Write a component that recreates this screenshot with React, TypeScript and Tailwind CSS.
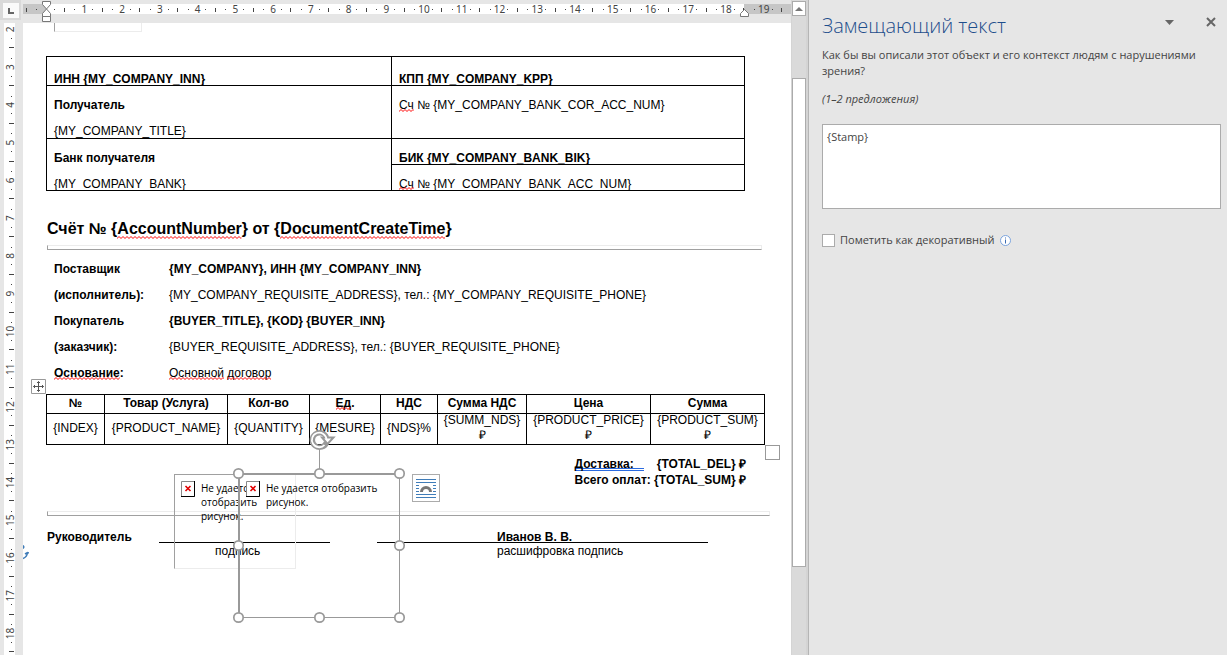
import { useId, useState } from "react"
import type { ReactNode } from "react"
import clsx from "clsx"

const CM = 37.75

const columns = [
  { label: "№", value: "{INDEX}", width: "w-[58px]" },
  { label: "Товар (Услуга)", value: "{PRODUCT_NAME}", width: "w-[123px]" },
  { label: "Кол-во", value: "{QUANTITY}", width: "w-[82px]" },
  { label: "Ед.", value: "{MESURE}", width: "w-[71px]", typo: true },
  { label: "НДС", value: "{NDS}%", width: "w-[57px]" },
  { label: "Сумма НДС", value: "{SUMM_NDS}", width: "w-[89px]", money: true },
  { label: "Цена", value: "{PRODUCT_PRICE}", width: "w-[124px]", money: true },
  { label: "Сумма", value: "{PRODUCT_SUM}", width: "w-[114px]", money: true },
]

function Typo({ children }: { children: ReactNode }) {
  const id = useId()
  return (
    <span className="relative inline-block">
      {children}
      <svg height="3" className="absolute bottom-0 left-0 w-full">
        <pattern id={id} width="4" height="3" patternUnits="userSpaceOnUse">
          <path d="M-1 1.500L0 2.500L2 .5L4 2.500L5 1.500" fill="none" stroke="#f00" />
        </pattern>
        <rect width="100%" height="3" fill={`url(#${id})`} />
      </svg>
    </span>
  )
}

function HorizontalRuler() {
  const marks = Array.from({ length: 20 }, (_, i) => i)
  return (
    <div className="h-[23px] overflow-hidden bg-[#e6e6e6]">
      <svg width="768" height="23" viewBox="23 0 768 23" className="block">
        <rect x="23" y="4" width="768" height="10" fill="#fff" />
        <rect x="23" y="4" width="23" height="10" fill="#c6c6c6" />
        <rect x="744" y="4" width="47" height="10" fill="#c6c6c6" />
        <rect x="26" y="8" width="1" height="4" fill="#444" />
        <rect x="36" y="9" width="1" height="1" fill="#444" />
        {marks.map((n) => {
          const x = 46 + n * CM
          return (
            <g key={n} fill="#444">
              {n > 0 && (
                <text x={x + 0.5} y="13" fontSize="10" textAnchor="middle" className="font-['Noto_Sans',sans-serif]">
                  {n}
                </text>
              )}
              <rect x={Math.round(x + CM / 4) - 1} y="9" width="1" height="1" />
              <rect x={Math.round(x + CM / 2) - 1} y="8" width="1" height="4" />
              {n < 19 && <rect x={Math.round(x + (CM * 3) / 4)} y="9" width="1" height="1" />}
            </g>
          )
        })}
        <path
          d="M42.500 1.500h8v3l-4 4.500l-4-4.500zM42.500 16.500v-3l4-4.500l4 4.500v3zM42.500 16.500h8v5h-8z"
          fill="#fff"
          stroke="#777"
        />
        <path d="M740.500 16.500v-3l4-4l4 4v3z" fill="#fff" stroke="#777" />
      </svg>
    </div>
  )
}

function VerticalRuler() {
  const marks = Array.from({ length: 17 }, (_, i) => i)
  return (
    <div className="w-[23px] shrink-0 bg-[#e6e6e6]">
      <div className="flex h-[20px] w-[21px] items-center justify-center bg-[#d9d9d9]">
        <svg width="16" height="15" viewBox="0 0 16 15">
          <rect width="16" height="15" fill="#fafafa" />
          <path d="M6 5v5h5" fill="none" stroke="#666" strokeWidth="2" />
        </svg>
      </div>
      <svg width="23" height="635" viewBox="0 20 23 635" className="block">
        <rect x="4" y="23" width="11" height="632" fill="#fff" />
        {marks.map((i) => {
          const y = 29.5 + i * CM
          return (
            <g key={i} fill="#444">
              <text
                transform={`translate(14 ${y}) rotate(-90)`}
                fontSize="10"
                textAnchor="middle"
                className="font-['Noto_Sans',sans-serif]"
              >
                {i + 2}
              </text>
              <rect x="11" y={Math.round(y + CM / 4) - 1} width="1" height="1" />
              <rect x="9" y={Math.round(y + CM / 2) - 1} width="5" height="1" />
              <rect x="11" y={Math.round(y + (CM * 3) / 4)} width="1" height="1" />
            </g>
          )
        })}
      </svg>
    </div>
  )
}

function Rule({ className }: { className?: string }) {
  return (
    <hr className={clsx("h-[5px] border border-t-[#ececec] border-r-[#ececec] border-b-[#a0a0a0] border-l-[#a0a0a0]", className)} />
  )
}

function RequisitesTable() {
  return (
    <table className="mr-6 ml-[23px] w-[calc(100%-46px)] table-fixed border-collapse leading-3 [&_td]:border [&_td]:border-black [&_td]:p-0 [&_td]:pl-[7px] [&_td]:align-top">
      <colgroup>
        <col className="w-[345px]" />
        <col />
      </colgroup>
      <tbody>
        <tr className="font-bold">
          <td>
            <p className="pt-4">ИНН {"{MY_COMPANY_INN}"}</p>
          </td>
          <td>
            <p className="pt-4">КПП {"{MY_COMPANY_KPP}"}</p>
          </td>
        </tr>
        <tr className="leading-[14px]">
          <td>
            <p className="pt-3 font-bold">Получатель</p>
            <p className="pt-3">{"{MY_COMPANY_TITLE}"}</p>
          </td>
          <td>
            <p className="pt-3">
              <Typo>Сч</Typo> № {"{MY_COMPANY_BANK_COR_ACC_NUM}"}
            </p>
          </td>
        </tr>
        <tr>
          <td rowSpan={2}>
            <p className="pt-[13px] font-bold">Банк получателя</p>
            <p className="pt-[14px]">{"{MY_COMPANY_BANK}"}</p>
          </td>
          <td>
            <p className="pt-[13px] font-bold">БИК {"{MY_COMPANY_BANK_BIK}"}</p>
          </td>
        </tr>
        <tr>
          <td>
            <p className="pt-[13px]">
              <Typo>Сч</Typo> № {"{MY_COMPANY_BANK_ACC_NUM}"}
            </p>
          </td>
        </tr>
      </tbody>
    </table>
  )
}

function Parties() {
  return (
    <dl className="mt-1.5 grid grid-cols-[115px_1fr] pl-[31px] leading-[26px] [&_dt]:font-bold">
      <dt>Поставщик</dt>
      <dd className="font-bold">{"{MY_COMPANY}, ИНН {MY_COMPANY_INN}"}</dd>
      <dt>(исполнитель):</dt>
      <dd>{"{MY_COMPANY_REQUISITE_ADDRESS}, тел.: {MY_COMPANY_REQUISITE_PHONE}"}</dd>
      <dt>Покупатель</dt>
      <dd className="font-bold">{"{BUYER_TITLE}, {KOD} {BUYER_INN}"}</dd>
      <dt>(заказчик):</dt>
      <dd>{"{BUYER_REQUISITE_ADDRESS}, тел.: {BUYER_REQUISITE_PHONE}"}</dd>
      <dt className="py-1.5 leading-[14px]">
        <Typo>Основание</Typo>:
      </dt>
      <dd className="py-1.5 leading-[14px]">
        <Typo>Основной</Typo> <Typo>договор</Typo>
      </dd>
    </dl>
  )
}

function ItemsTable() {
  return (
    <div className="relative mt-2 mr-[3px] ml-[23px]">
      <table className="w-full table-fixed border-collapse text-center">
        <thead>
          <tr>
            {columns.map((col) => (
              <th
                key={col.label}
                className={clsx("border border-black p-0 pt-px pb-[3px] leading-[14px] font-bold", col.width)}
              >
                {col.typo ? (
                  <>
                    <Typo>Ед</Typo>.
                  </>
                ) : (
                  col.label
                )}
              </th>
            ))}
          </tr>
        </thead>
        <tbody>
          <tr className="leading-[13px]">
            {columns.map((col) => (
              <td key={col.label} className={clsx("border border-black p-0 whitespace-nowrap", !col.money && "pb-0.5")}>
                {col.value}
                {col.money && <span className="block leading-[17px]">₽</span>}
              </td>
            ))}
          </tr>
        </tbody>
      </table>
      <svg width="15" height="15" viewBox="0 0 15 15" className="absolute -top-[15px] -left-[15px]">
        <path d="M.5.5h14v14h-14z" fill="#fff" stroke="#999" />
        <path
          d="M7.500 2.500v10M2.500 7.500h10M6 4l1.500-1.500L9 4M6 11l1.500 1.500L9 11M4 6L2.500 7.500L4 9M11 6l1.500 1.500L11 9"
          fill="none"
          stroke="#555"
        />
      </svg>
      <span className="absolute -right-[15px] -bottom-[15px] size-[15px] border border-[#999] bg-white" />
    </div>
  )
}

function Totals() {
  return (
    <div className="mt-[11px] mr-[22px] ml-auto w-fit leading-4 font-bold">
      <p className="flex h-4 items-start justify-between">
        <span className="h-[15px] w-[69px] border-b-3 border-double border-[#2b6be0]">Доставка:</span>
        <span>{"{TOTAL_DEL} ₽"}</span>
      </p>
      <p>{"Всего оплат: {TOTAL_SUM} ₽"}</p>
    </div>
  )
}

function Signature() {
  return (
    <div className="mt-3.5 flex pl-6 leading-[14px]">
      <p className="w-28 font-bold">Руководитель</p>
      <div className="w-[171px]">
        <p className="h-[13px] border-b border-black" />
        <p className="pl-14 leading-4">подпись</p>
      </div>
      <div className="ml-[47px] w-[331px]">
        <p className="h-[13px] border-b border-black pl-[120px] font-bold">Иванов В. В.</p>
        <p className="pl-[120px] leading-4">расшифровка подпись</p>
      </div>
    </div>
  )
}

function MissingPicture({ className }: { className?: string }) {
  return (
    <div className={clsx("absolute flex gap-1.5 p-1.5 font-['Open_Sans',sans-serif] text-[10px] leading-[14px]", className)}>
      <svg width="14" height="16" viewBox="0 0 14 16" className="shrink-0">
        <path d="M.5.5h13v15h-13z" fill="#fff" stroke="#888" />
        <path d="M13.500 0v15.500H0" fill="none" stroke="#000" />
        <path d="M4.500 5l5 5M9.500 5l-5 5" stroke="#e00000" strokeWidth="1.600" />
      </svg>
      <p>Не удается отобразить рисунок.</p>
    </div>
  )
}

function SelectionFrame() {
  const handles = [
    [13, 45],
    [94, 45],
    [174, 45],
    [13, 117],
    [174, 117],
    [13, 189],
    [94, 189],
    [174, 189],
  ]
  return (
    <svg width="187" height="202" viewBox="0 0 187 202" className="absolute top-[405px] left-[202px]">
      <path d="M14 189V46H174" fill="none" stroke="#999" strokeWidth="2" />
      <path d="M174.500 45V189.500H13M94.500 45V21" fill="none" stroke="#999" />
      {handles.map(([x, y]) => (
        <circle key={`${x}-${y}`} cx={x + 0.5} cy={y + 0.5} r="4.700" fill="#fff" stroke="#999" strokeWidth="1.700" />
      ))}
      <path d="M101.500 14.500A7.300 7.300 0 1 1 101.500 9.500" fill="none" stroke="#999" strokeWidth="5.400" />
      <path d="M97 9.500h11.500L102.500 16z" fill="#fff" stroke="#999" strokeWidth="2" />
      <path d="M99.500 17A7.300 7.300 0 1 1 101.500 11.500" fill="none" stroke="#fff" strokeWidth="1.800" />
    </svg>
  )
}

function ScrollBar() {
  return (
    <div className="flex w-[17px] shrink-0 flex-col border-r-2 border-l border-[#d4d4d4] bg-[#dadada]">
      <button
        type="button"
        aria-label="Прокрутить вверх"
        className="mt-px flex h-[15px] items-center justify-center border border-[#ababab] bg-white"
      >
        <svg width="8" height="4" viewBox="0 0 8 4">
          <path d="M0 4L4 0l4 4z" fill="#777" />
        </svg>
      </button>
      <div className="mt-[62px] h-[489px] border border-[#ababab] bg-white" />
    </div>
  )
}

function AltTextPane() {
  const [description, setDescription] = useState("{Stamp}")
  const [decorative, setDecorative] = useState(false)

  return (
    <aside className="w-[419px] shrink-0 border-l border-[#b5b5b5] bg-[#e6e6e6] pr-1.5 pl-[13px] font-['Open_Sans',sans-serif] text-[11px] text-[#444]">
      <header className="flex items-start pt-3">
        <h2 className="flex-1 text-xl leading-7 text-[#1e4e8c]">
          <span className="font-light">Замещающий текст</span>
        </h2>
        <button type="button" aria-label="Параметры области" className="mt-2 mr-8">
          <svg width="9" height="5" viewBox="0 0 9 5">
            <path d="M0 0h9L4.500 5z" fill="#666" />
          </svg>
        </button>
        <button type="button" aria-label="Закрыть" className="mt-[5px] mr-[5px]">
          <svg width="10" height="10" viewBox="0 0 10 10">
            <path d="M1 1l8 8M9 1L1 9" stroke="#666" strokeWidth="2" />
          </svg>
        </button>
      </header>
      <label htmlFor="alt-text" className="mt-[7px] block leading-4">
        Как бы вы описали этот объект и его контекст людям с нарушениями зрения?
      </label>
      <p className="mt-3 leading-4 italic">(1–2 предложения)</p>
      <textarea
        id="alt-text"
        value={description}
        onChange={(e) => setDescription(e.target.value)}
        className="mt-[17px] block h-[85px] w-full resize-none border border-[#ababab] bg-white px-1 py-1 leading-4 outline-none"
      />
      <div className="mt-[23px] flex items-center">
        <input
          id="decorative"
          type="checkbox"
          checked={decorative}
          onChange={(e) => setDecorative(e.target.checked)}
          className="size-[13px] appearance-none border border-[#ababab] bg-white checked:bg-[#1e4e8c]"
        />
        <label htmlFor="decorative" className="ml-[5px] leading-4">
          Пометить как декоративный
        </label>
        <svg width="11" height="11" viewBox="0 0 11 11" className="ml-1.5">
          <circle cx="5.500" cy="5.500" r="5" fill="#fff" stroke="#7ba3dc" />
          <path d="M5.500 2.500v1M5.500 4.500v4" stroke="#3c6cb4" />
        </svg>
      </div>
    </aside>
  )
}

export default function App() {
  return (
    <div className="flex min-h-screen bg-[#e6e6e6] font-['Liberation_Sans',Arial,sans-serif] text-xs text-black">
      <VerticalRuler />
      <div className="flex min-w-0 flex-1 flex-col">
        <HorizontalRuler />
        <main className="relative flex-1 overflow-hidden bg-white pr-[23px]">
          <div className="ml-[31px] h-[9px] w-[88px] border-r border-b border-l border-[#ececec] border-l-[#a0a0a0]" />
          <div className="mt-6">
            <RequisitesTable />
          </div>
          <h1 className="mt-7 pl-6 text-base leading-5 font-bold">
            Счёт № {"{"}
            <Typo>AccountNumber</Typo>
            {"} от {"}
            <Typo>DocumentCreateTime</Typo>
            {"}"}
          </h1>
          <Rule className="mt-1.5 mr-1.5 ml-6" />
          <Parties />
          <ItemsTable />
          <Totals />
          <Rule className="mt-[23px] -mr-0.5 ml-6" />
          <Signature />

          <MissingPicture className="top-[451px] left-[151px] h-[95px] w-[122px] border border-t-[#a0a0a0] border-r-[#ececec] border-b-[#ececec] border-l-[#a0a0a0]" />
          <MissingPicture className="top-[452px] left-[217px] w-[160px]" />
          <SelectionFrame />
          <button
            type="button"
            aria-label="Параметры разметки"
            className="absolute top-[451px] left-[389px] flex size-7 items-center justify-center border border-[#ababab] bg-white"
          >
            <svg width="20" height="19" viewBox="0 0 20 19">
              <path
                d="M0 .5h20M0 3.500h20M0 6.500h3M17 6.500h3M0 9.500h3M17 9.500h3M0 12.500h3M17 12.500h3M0 15.500h20M0 18.500h20"
                stroke="#3f7cb8"
              />
              <path d="M5.500 13a4.500 4.500 0 0 1 9 0" fill="none" stroke="#777" strokeWidth="3" />
            </svg>
          </button>
          <svg width="6" height="15" viewBox="0 0 6 15" className="absolute top-[522px] left-0">
            <path d="M0 .5q1.500 1.500 0 3M0 13.500q4-1.500 4.500-6M2 9l2.500-1.500L6 8" fill="none" stroke="#3f7cb8" strokeWidth="1.500" />
          </svg>
        </main>
      </div>
      <ScrollBar />
      <AltTextPane />
    </div>
  )
}
